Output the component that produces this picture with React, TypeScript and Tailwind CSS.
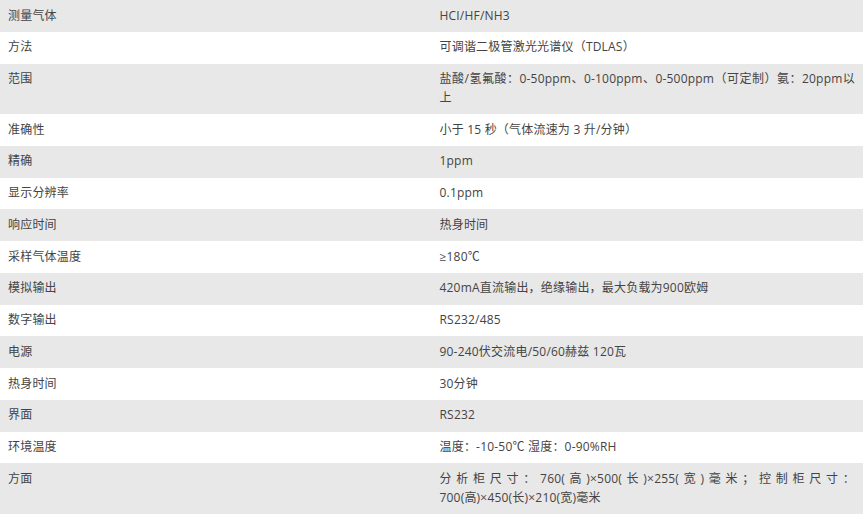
const rows: [string, string][] = [
  ["测量气体", "HCI/HF/NH3"],
  ["方法", "可调谐二极管激光光谱仪（TDLAS）"],
  ["范围", "盐酸/氢氟酸：0-50ppm、0-100ppm、0-500ppm（可定制）氨：20ppm以上"],
  ["准确性", "小于 15 秒（气体流速为 3 升/分钟）"],
  ["精确", "1ppm"],
  ["显示分辨率", "0.1ppm"],
  ["响应时间", "热身时间"],
  ["采样气体温度", "≥180℃"],
  ["模拟输出", "420mA直流输出，绝缘输出，最大负载为900欧姆"],
  ["数字输出", "RS232/485"],
  ["电源", "90-240伏交流电/50/60赫兹 120瓦"],
  ["热身时间", "30分钟"],
  ["界面", "RS232"],
  ["环境温度", "温度：-10-50℃ 湿度：0-90%RH"],
  ["方面", "分析柜尺寸：760(高)×500(长)×255(宽)毫米；控制柜尺寸：700(高)×450(长)×210(宽)毫米"],
];

export default function App() {
  return (
    <div className="w-[863px] bg-white font-['Open_Sans','Noto_Sans_CJK_SC',sans-serif] text-[12px] leading-[18.75px] tracking-[0.2px] text-[#444]">
      {rows.map(([label, value], i) => (
        <div
          key={label + i}
          className={`grid grid-cols-2 ${i % 2 === 0 ? "bg-[#e8e8e8]" : "bg-white"}`}
        >
          <div className="px-2 py-[6.5px]">{label}</div>
          <div className="px-2 py-[6.5px] text-justify">{value}</div>
        </div>
      ))}
    </div>
  );
}
